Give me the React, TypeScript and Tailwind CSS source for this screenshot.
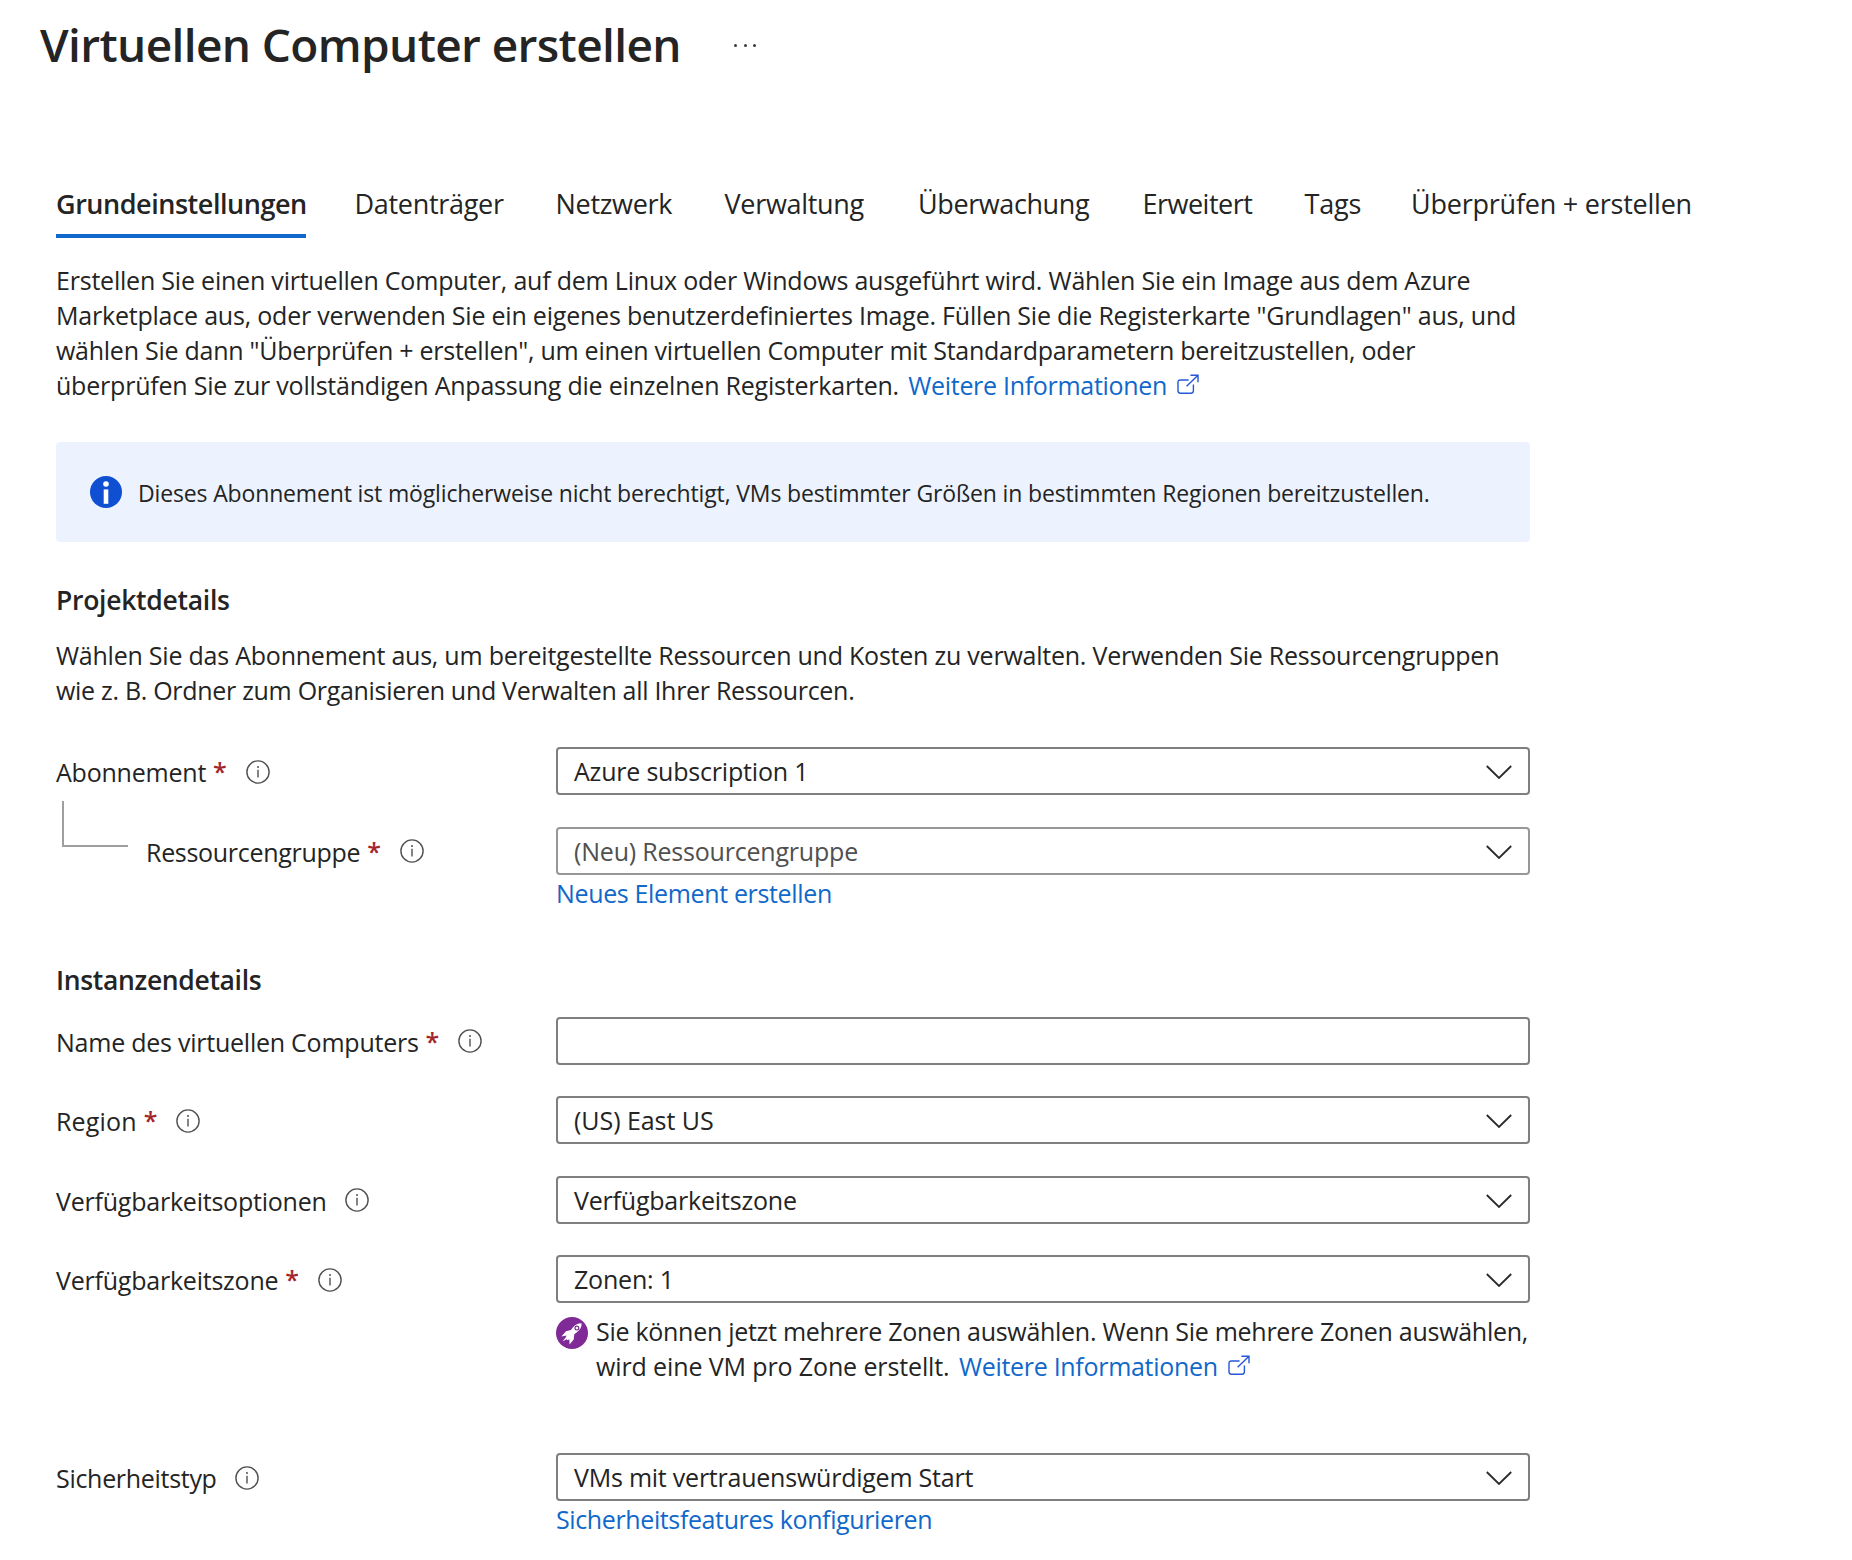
import type { ReactNode } from "react";

function InfoIcon({ className }: { className: string }) {
  return (
    <svg viewBox="0 0 24 24" className={`h-6 w-6 shrink-0 ${className}`} fill="none">
      <circle cx="12" cy="12" r="11.1" stroke="#505050" strokeWidth="1.4" />
      <path d="M12 9.8V17.6" stroke="#505050" strokeWidth="1.4" />
      <circle cx="12" cy="7" r="1" fill="#505050" />
    </svg>
  );
}

function ExternalIcon() {
  return (
    <svg viewBox="0 0 22 21" className="ml-2.5 inline-block h-[21px] w-[22px] align-[0px]" fill="none" stroke="#2458d8" strokeWidth="1.4">
      <path d="M11.6 6H3.4Q1 6 1 8.4V16.8Q1 19.2 3.4 19.2H14Q16.4 19.2 16.4 16.8V10.4" />
      <path d="M9.6 12.2 21 1.2M13.4 1.2H21V8.2" />
    </svg>
  );
}

function Chevron() {
  return (
    <svg viewBox="0 0 26 14" className="mt-px h-3.5 w-[26px]" fill="none" stroke="#2b2a29" strokeWidth="1.8">
      <path d="M0.8 1 13 13 25.2 1" />
    </svg>
  );
}

function BannerInfoIcon() {
  return (
    <svg viewBox="0 0 32 32" className="h-8 w-8 shrink-0">
      <circle cx="16" cy="16" r="16" fill="#0f50d2" />
      <circle cx="16" cy="8" r="2.8" fill="#fff" />
      <rect x="13.7" y="13.4" width="4.6" height="14.4" fill="#fff" />
    </svg>
  );
}

function RocketIcon() {
  return (
    <svg viewBox="0 0 32 32" className="mt-[3px] h-8 w-8 shrink-0">
      <circle cx="16" cy="16" r="16" fill="#7f2a96" />
      <path
        fill="#fff"
        d="M25.6 6.3C21.6 6.3 18.6 8 16.4 11L14.9 13.1 10 14.3 5.4 19.6 10.6 18.6 9.8 20.3 6.6 24.4 10.6 22.2 11.7 23.2 13.4 22.2 13.5 27.6 17.7 22.4 18.3 17.3 20.6 15.6C24 13 25.8 10.4 25.6 6.3Z"
      />
      <circle cx="20.9" cy="11.1" r="1.9" fill="#fff" stroke="#7f2a96" strokeWidth="1.2" />
    </svg>
  );
}

function Link({ children, className }: { children: ReactNode; className: string }) {
  return (
    <a href="#" className={`text-[#1068ca] ${className}`}>
      {children}
    </a>
  );
}

function Label({
  text,
  required = false,
  icon,
  tracking = "tracking-[-0.22px]",
}: {
  text: string;
  required?: boolean;
  icon: string;
  tracking?: string;
}) {
  return (
    <div className="flex items-start">
      <span className={`pt-2 leading-[35px] whitespace-nowrap ${tracking}`}>{text}</span>
      {required && (
        <span className="-mr-px ml-[7px] pt-[7px] text-[25px] leading-[35px] font-semibold text-[#a4262c]">*</span>
      )}
      <InfoIcon className={`${required ? "ml-5" : "ml-[18px]"} ${icon}`} />
    </div>
  );
}

function Field({ value, placeholder = false, tracking = "" }: { value: string; placeholder?: boolean; tracking?: string }) {
  return (
    <div
      className={`flex h-12 w-[974px] items-center justify-between rounded-[4px] border-2 pr-4 pl-4 ${
        placeholder ? "border-[#979797] text-[#505050]" : "border-[#7f7f7e]"
      }`}
    >
      <span className={`leading-[44px] whitespace-nowrap ${tracking}`}>{value}</span>
      <Chevron />
    </div>
  );
}

function Row({ label, children, className = "" }: { label: ReactNode; children: ReactNode; className?: string }) {
  return (
    <div className={`flex items-start ${className}`}>
      <div className="w-[500px] shrink-0">{label}</div>
      <div className="w-[974px]">{children}</div>
    </div>
  );
}

const tabs = [
  { name: "Datenträger", style: "w-[201px]" },
  { name: "Netzwerk", style: "w-[169px]" },
  { name: "Verwaltung", style: "w-[193.5px]" },
  { name: "Überwachung", style: "w-[224.5px] tracking-[-0.4px]" },
  { name: "Erweitert", style: "w-[162px] tracking-[-0.5px]" },
  { name: "Tags", style: "w-[106.5px] tracking-[-0.15px]" },
  { name: "Überprüfen + erstellen", style: "tracking-[-0.23px]" },
];

export default function App() {
  return (
    <div className="h-[1560px] w-[1852px] overflow-hidden bg-white pt-[13px] font-['Open_Sans','Noto_Sans',sans-serif] text-[25px] leading-[35px] tracking-[-0.2px] text-[#242424]">
      <header className="flex h-[62px] items-start pl-10">
        <h1 className="w-[694px] text-[46px] leading-[62px] font-semibold tracking-[-0.62px]">Virtuellen Computer erstellen</h1>
        <div className="mt-[31px] flex gap-[6.5px]">
          <i className="h-[3px] w-[3px] rounded-full bg-[#3b3a39]" />
          <i className="h-[3px] w-[3px] rounded-full bg-[#3b3a39]" />
          <i className="h-[3px] w-[3px] rounded-full bg-[#3b3a39]" />
        </div>
      </header>

      <nav className="mt-[109px] flex h-[54px] pl-14 text-[27px] leading-[39px] tracking-[-0.3px] whitespace-nowrap">
        <div className="w-[298.5px]">
          <div className="h-[54px] w-[250px] border-b-4 border-[#1068ca] font-semibold tracking-[-0.46px]">Grundeinstellungen</div>
        </div>
        {tabs.map((t) => (
          <div key={t.name} className={t.style}>
            {t.name}
          </div>
        ))}
      </nav>

      <main className="pl-14">
        <p className="mt-[25px] tracking-[-0.21px] whitespace-nowrap">
          Erstellen Sie einen virtuellen Computer, auf dem Linux oder Windows ausgeführt wird. Wählen Sie ein Image aus dem Azure
          <br />
          Marketplace aus, oder verwenden Sie ein eigenes benutzerdefiniertes Image. Füllen Sie die Registerkarte "Grundlagen" aus, und
          <br />
          <span className="tracking-[-0.26px]">
            wählen Sie dann "Überprüfen + erstellen", um einen virtuellen Computer mit Standardparametern bereitzustellen, oder
          </span>
          <br />
          überprüfen Sie zur vollständigen Anpassung die einzelnen Registerkarten.{" "}
          <Link className="ml-[3px] tracking-[-0.3px]">
            Weitere Informationen
            <ExternalIcon />
          </Link>
        </p>

        <div className="mt-[39px] flex h-[100px] w-[1474px] items-start rounded-[4px] bg-[#ecf3fe] pt-[34px] pl-[34px]">
          <BannerInfoIcon />
          <p className="mt-px ml-4 text-[23px] leading-8 tracking-[-0.15px] whitespace-nowrap">
            Dieses Abonnement ist möglicherweise nicht berechtigt, VMs bestimmter Größen in bestimmten Regionen bereitzustellen.
          </p>
        </div>

        <h2 className="mt-10 text-[26.5px] leading-9 font-semibold tracking-[-0.27px]">Projektdetails</h2>
        <p className="mt-5 tracking-[-0.23px] whitespace-nowrap">
          Wählen Sie das Abonnement aus, um bereitgestellte Ressourcen und Kosten zu verwalten. Verwenden Sie Ressourcengruppen
          <br />
          <span className="tracking-[-0.3px]">wie z. B. Ordner zum Organisieren und Verwalten all Ihrer Ressourcen.</span>
        </p>

        <Row className="mt-[39px]" label={<Label text="Abonnement" required icon="mt-[13px]" />}>
          <Field value="Azure subscription 1" />
        </Row>
        <Row
          className="mt-8"
          label={
            <div className="flex items-start">
              <div className="-mt-[26px] mr-[18px] ml-1.5 h-[46px] w-[66px] border-b-2 border-l-2 border-[#a19f9d]" />
              <Label text="Ressourcengruppe" required icon="mt-3" tracking="tracking-[-0.3px]" />
            </div>
          }
        >
          <Field value="(Neu) Ressourcengruppe" placeholder />
          <Link className="mt-px block tracking-[-0.35px]">Neues Element erstellen</Link>
        </Row>

        <h2 className="mt-[51px] text-[26.5px] leading-9 font-semibold tracking-[-0.33px]">Instanzendetails</h2>
        <Row
          className="mt-[19px]"
          label={<Label text="Name des virtuellen Computers" required icon="mt-3" tracking="tracking-[-0.24px]" />}
        >
          <div className="h-12 w-[974px] rounded-[4px] border-2 border-[#7f7f7e]" />
        </Row>
        <Row className="mt-[31px]" label={<Label text="Region" required icon="mt-[13px]" tracking="tracking-[0.15px]" />}>
          <Field value="(US) East US" tracking="tracking-[-0.05px]" />
        </Row>
        <Row className="mt-8" label={<Label text="Verfügbarkeitsoptionen" icon="mt-3" />}>
          <Field value="Verfügbarkeitszone" />
        </Row>
        <Row className="mt-[31px]" label={<Label text="Verfügbarkeitszone" required icon="mt-[13px]" />}>
          <Field value="Zonen: 1" />
          <div className="mt-[11px] flex items-start gap-2">
            <RocketIcon />
            <p className="whitespace-nowrap">
              <span className="tracking-[-0.28px]">Sie können jetzt mehrere Zonen auswählen. Wenn Sie mehrere Zonen auswählen,</span>
              <br />
              <span className="tracking-[-0.12px]">wird eine VM pro Zone erstellt. </span>
              <Link className="ml-[3px] tracking-[-0.3px]">
                Weitere Informationen
                <ExternalIcon />
              </Link>
            </p>
          </div>
        </Row>
        <Row className="mt-[69px]" label={<Label text="Sicherheitstyp" icon="mt-[13px]" tracking="tracking-[-0.3px]" />}>
          <Field value="VMs mit vertrauenswürdigem Start" tracking="tracking-[-0.23px]" />
          <Link className="mt-px block tracking-[-0.38px]">Sicherheitsfeatures konfigurieren</Link>
        </Row>
      </main>
    </div>
  );
}
